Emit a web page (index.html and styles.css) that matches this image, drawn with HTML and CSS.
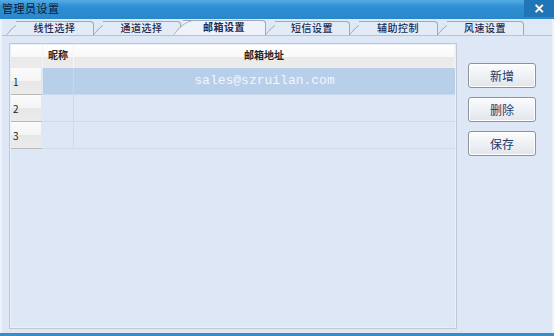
FILE: index.html
```html
<!DOCTYPE html>
<html lang="zh-CN">
<head>
    <meta charset="UTF-8">
    <title>管理员设置</title>
    <link rel="stylesheet" href="styles.css">
</head>
<body>
    <div class="window">
        <div class="titlebar">
            <span class="title">管理员设置</span>
            <span class="close">×</span>
        </div>
        <div class="tabs">
            <div class="tab t1">线性选择</div>
            <div class="tab t2">通道选择</div>
            <div class="tab t3 active">邮箱设置</div>
            <div class="tab t4">短信设置</div>
            <div class="tab t5">辅助控制</div>
            <div class="tab t6">风速设置</div>
        </div>
        <div class="page">
            <div class="grid">
                <div class="row head">
                    <div class="cell rowhead"></div>
                    <div class="cell nick">昵称</div>
                    <div class="cell mail">邮箱地址</div>
                </div>
                <div class="row selected">
                    <div class="cell rowhead">1</div>
                    <div class="cell nick"></div>
                    <div class="cell mail">sales@szruilan.com</div>
                </div>
                <div class="row">
                    <div class="cell rowhead">2</div>
                    <div class="cell nick"></div>
                    <div class="cell mail"></div>
                </div>
                <div class="row">
                    <div class="cell rowhead">3</div>
                    <div class="cell nick"></div>
                    <div class="cell mail"></div>
                </div>
            </div>
            <div class="actions">
                <button type="button">新增</button>
                <button type="button">删除</button>
                <button type="button">保存</button>
            </div>
        </div>
    </div>
    <div class="taskbar"></div>
</body>
</html>
```

FILE: styles.css
```css
body {
    margin: 0;
    width: 554px;
    height: 336px;
    overflow: hidden;
    background: #dfe8f5;
    font-family: "Noto Sans CJK SC", "DejaVu Sans", sans-serif;
    color: #1c2a50;
}
.window {
    height: 333px;
    display: flex;
    flex-direction: column;
    border-left: 2px solid #eef3fb;
    border-right: 2px solid #eef3fb;
    box-sizing: border-box;
}
.titlebar {
    height: 19px;
    margin: 0 -2px;
    display: flex;
    align-items: flex-start;
    justify-content: space-between;
    background: linear-gradient(#55ace4, #2f8fd2 35%, #2987cc);
}
.title {
    font-size: 11px;
    line-height: 17px;
    padding-left: 2px;
    color: #0e1a36;
    letter-spacing: 0.5px;
}
.close {
    width: 30px;
    height: 17px;
    background: #1f75b6;
    color: #fff;
    font-family: "DejaVu Sans", sans-serif;
    font-weight: bold;
    font-size: 14px;
    line-height: 16px;
    text-align: center;
}
.tabs {
    height: 17px;
    display: flex;
    align-items: flex-end;
    padding-left: 14px;
    border-bottom: 1px solid #b9c2cf;
    box-sizing: border-box;
}
.tab {
    position: relative;
    height: 13px;
    margin-left: 9px;
    border-top: 1px solid #9ea8b6;
    border-right: 1px solid #9ea8b6;
    border-top-right-radius: 4px;
    font-size: 10px;
    font-weight: 500;
    line-height: 12px;
    text-align: center;
    letter-spacing: 0.5px;
    background: #e3ebf7;
}
.tab::before {
    content: "";
    position: absolute;
    left: -10px;
    top: -1px;
    bottom: 0;
    width: 14px;
    border-left: 1px solid #9ea8b6;
    border-top: 1px solid #9ea8b6;
    border-top-left-radius: 10px 13px;
    transform: skewX(-36deg);
    transform-origin: bottom left;
    background: #e3ebf7;
    z-index: -1;
}
.t1 { margin-left: 0; width: 77px; }
.t2 { width: 77px; }
.t3 { margin-left: 2px; width: 82px; }
.t4 { width: 74px; }
.t5 { width: 78px; }
.t6 { width: 76px; }
.tab.active {
    height: 14px;
    font-weight: bold;
    background: #eef3fb;
    z-index: 1;
}
.tab.active::before {
    background: #eef3fb;
}
.page {
    flex: 1;
    display: flex;
    padding: 7px 0 4px 7px;
    background: #dee7f5;
}
.grid {
    width: 448px;
    box-sizing: border-box;
    border: 1px solid #c2c8d1;
    box-shadow: inset 0 0 0 1px #e9eef7;
    padding: 1px;
    display: flex;
    flex-direction: column;
}
.row {
    display: flex;
    height: 27px;
}
.row.head {
    height: 23px;
}
.cell {
    box-sizing: border-box;
    border-right: 1px solid #d2dae6;
    border-bottom: 1px solid #d2dae6;
    font-size: 10px;
}
.rowhead {
    width: 32px;
    padding-left: 2px;
    line-height: 27px;
    background: linear-gradient(#fbfbfb, #f4f4f4 50%, #e7e7e7 51%, #ebebeb);
    border-right: 2px solid #dee7f5;
    border-bottom: 1px solid #b9b9b9;
    color: #222;
}
.nick {
    width: 31px;
    text-align: center;
}
.mail {
    flex: 1;
    text-align: center;
    border-right: none;
}
.head .cell {
    line-height: 19px;
    font-weight: bold;
    color: #222;
    background: linear-gradient(#ffffff, #f8f8f8 50%, #e9e9e9 51%, #ececec);
    border-bottom: none;
    border-right: 1px solid #f4f4f4;
}
.head .rowhead {
    border-right: 1px solid #f4f4f4;
}
.selected .nick,
.selected .mail {
    background: #b8cfe9;
    border-right-color: #c8d9ee;
    border-bottom-color: #c8d9ee;
}
.selected .mail {
    font-family: "Liberation Mono", monospace;
    font-size: 13px;
    line-height: 26px;
    color: #f3f6fb;
}
.actions {
    display: flex;
    flex-direction: column;
    gap: 9px;
    padding: 20px 0 0 11px;
}
.actions button {
    width: 68px;
    height: 25px;
    font-family: "Noto Sans CJK SC", sans-serif;
    font-size: 12px;
    color: #283868;
    border: 1px solid #8c939c;
    border-radius: 3px;
    background: linear-gradient(#fbfcfd, #eef1f5 50%, #e2e6ec);
    box-shadow: inset 0 0 0 1px #ffffff;
    padding: 0;
}
.taskbar {
    height: 3px;
    background: #3a8cc8;
}
```
